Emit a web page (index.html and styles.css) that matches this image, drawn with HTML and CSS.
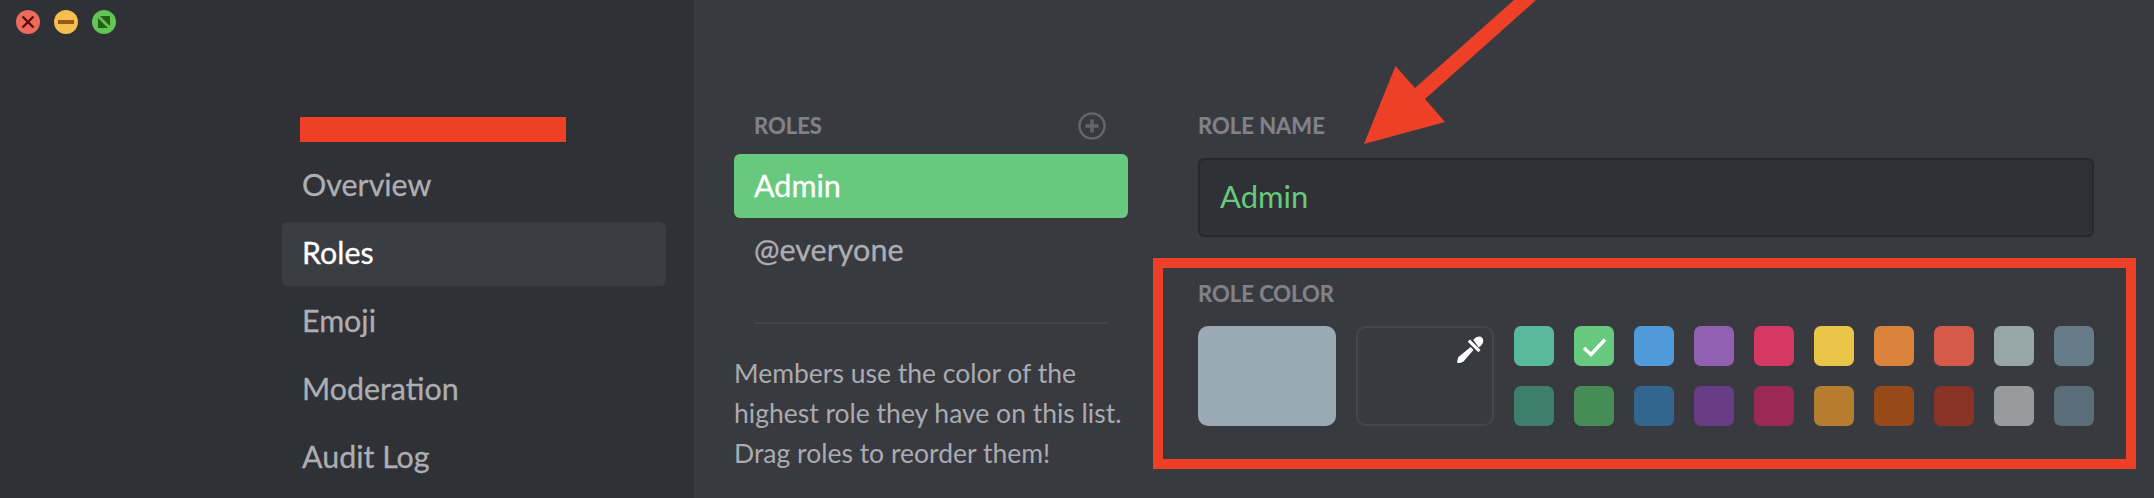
FILE: index.html
```html
<!DOCTYPE html>
<html lang="en">
<head>
<meta charset="utf-8">
<title>Server Settings - Roles</title>
<link rel="stylesheet" href="styles.css">
</head>
<body>
<div class="app">
  <aside class="sidebar">
    <div class="lights">
      <span class="light close"><svg viewBox="0 0 24 24"><path d="M6.500 6.500 17.500 17.500M17.500 6.500 6.500 17.500"/></svg></span>
      <span class="light min"><svg viewBox="0 0 24 24"><path d="M4 12H20"/></svg></span>
      <span class="light max"><svg viewBox="0 0 24 24"><path class="fill" d="M8 6H18V16ZM6 8V18H16Z"/></svg></span>
    </div>
    <div class="redact"></div>
    <nav class="nav">
      <a class="nav-item">Overview</a>
      <a class="nav-item active">Roles</a>
      <a class="nav-item">Emoji</a>
      <a class="nav-item">Moderation</a>
      <a class="nav-item">Audit Log</a>
    </nav>
  </aside>
  <main class="main">
    <section class="roles">
      <div class="roles-head">
        <h2 class="label">ROLES</h2>
        <svg class="add" viewBox="0 0 28 28"><circle cx="14" cy="14" r="12.5"/><path d="M14 7.5V20.500M7.500 14H20.500"/></svg>
      </div>
      <div class="role selected">Admin</div>
      <div class="role">@everyone</div>
      <div class="divider"></div>
      <p class="help">Members use the color of the<br>highest role they have on this list.<br>Drag roles to reorder them!</p>
    </section>
    <section class="editor">
      <h2 class="label">ROLE NAME</h2>
      <div class="input">Admin</div>
      <div class="color-box">
        <h2 class="label">ROLE COLOR</h2>
        <div class="color-row">
          <div class="big default"></div>
          <div class="big custom">
            <svg class="dropper" viewBox="0 0 28 28">
              <path d="M17.200 3.800 Q21 -0.500 25 0.800 Q28.500 3 26.500 7.500 Q25.500 9.500 22.800 11.500Z"/>
              <path d="M11.800 5.800 14 3.600 24.500 14 22.300 16.200Z"/>
              <path d="M14.600 11.100 17.400 13.900 7.500 25.500 Q4 27.500 1.500 27 Q0.500 26 2.500 21Z"/>
            </svg>
          </div>
          <div class="swatches">
            <div class="sw c1"></div>
            <div class="sw c2"><svg viewBox="0 0 40 40"><path d="M10 22 17 28.500 31 13.500"/></svg></div>
            <div class="sw c3"></div>
            <div class="sw c4"></div>
            <div class="sw c5"></div>
            <div class="sw c6"></div>
            <div class="sw c7"></div>
            <div class="sw c8"></div>
            <div class="sw c9"></div>
            <div class="sw c10"></div>
            <div class="sw c11"></div>
            <div class="sw c12"></div>
            <div class="sw c13"></div>
            <div class="sw c14"></div>
            <div class="sw c15"></div>
            <div class="sw c16"></div>
            <div class="sw c17"></div>
            <div class="sw c18"></div>
            <div class="sw c19"></div>
            <div class="sw c20"></div>
          </div>
        </div>
      </div>
    </section>
  </main>
  <svg class="arrow" viewBox="0 0 180 150"><polygon points="154,0 176,0 65,99 85,122 4,144 35.500,66 55,88"/></svg>
</div>
</body>
</html>
```
FILE: styles.css
```css
* { box-sizing: border-box; }
html, body { margin: 0; padding: 0; }
body {
  width: 2154px;
  height: 498px;
  overflow: hidden;
  background: #393a40;
  font-family: "Lato", "Open Sans", sans-serif;
}
.app { position: relative; display: flex; height: 498px; }

.sidebar { width: 694px; flex: none; background: #303136; }
.lights { display: flex; gap: 14px; padding: 10px 0 0 16px; height: 34px; }
.light { width: 24px; height: 24px; border-radius: 50%; display: block; }
.light svg { display: block; width: 24px; height: 24px; fill: none; stroke-width: 2.4; }
.close { background: #ed6a5f; }
.close svg { stroke: #5a0f0a; }
.min { background: #f4bf4f; }
.min svg { stroke: #99581a; stroke-width: 4; }
.max { background: #61c454; }
.max .fill { fill: #245f14; stroke: none; }

.redact { width: 266px; height: 25px; margin: 83px 0 0 300px; background: #ee4026; }
.nav { display: flex; flex-direction: column; gap: 4px; width: 384px; margin: 12px 0 0 282px; }
.nav-item {
  display: flex; align-items: center;
  height: 64px; padding: 0 0 4px 20px;
  border-radius: 6px;
  font-size: 30.4px; font-weight: 400;
  -webkit-text-stroke: 0.3px currentColor;
  color: #acaeb3;
}
.nav-item.active { background: #3c3d43; color: #fff; }

.main { flex: 1; display: flex; }
.roles { width: 394px; margin-left: 40px; padding-top: 112px; flex: none; }
.roles-head { display: flex; align-items: center; justify-content: space-between; height: 28px; padding: 0 22px 0 20px; margin-bottom: 14px; }
.label { margin: 0; font-size: 22px; line-height: 28px; font-weight: 700; color: #808288; -webkit-text-stroke: 0.2px currentColor; }
.add { width: 28px; height: 28px; fill: none; stroke: #63656b; stroke-width: 2.500; }
.add path { stroke-width: 3.500; }
.role {
  display: flex; align-items: center;
  height: 64px; padding: 0 0 3px 20px;
  border-radius: 6px;
  font-size: 30.5px; font-weight: 400;
  -webkit-text-stroke: 0.3px currentColor;
  color: #acaeb3;
}
.role.selected { background: #66c97e; color: #fff; }
.divider { height: 2px; margin: 40px 20px 0; background: #42444a; }
.help { margin: 29px 0 0 0; font-size: 26.5px; line-height: 40px; color: #a9abb0; }

.editor { width: 896px; margin-left: 70px; padding-top: 112px; flex: none; }
.input {
  display: flex; align-items: center;
  height: 79px; margin-top: 18px; padding: 0 0 3px 20px;
  background: #303136;
  border: 2px solid #27282c;
  border-radius: 6px;
  font-size: 31px;
  color: #66c97e;
}
.color-box {
  height: 211px;
  margin: 21px -42px 0 -45px;
  padding: 12px 0 0 35px;
  border: 10px solid #ee4026;
}
.color-row { display: flex; gap: 20px; margin-top: 18px; }
.big { width: 138px; height: 100px; border-radius: 10px; }
.default { background: #99aab5; }
.custom { position: relative; border: 2px solid #45474d; }
.dropper { position: absolute; right: 8px; top: 8px; width: 28px; height: 28px; fill: #fff; }
.swatches { display: grid; grid-template-columns: repeat(10, 40px); grid-auto-rows: 40px; gap: 20px; }
.sw { border-radius: 7px; }
.sw svg { display: block; width: 40px; height: 40px; fill: none; stroke: #fff; stroke-width: 3.500; }
.c1 { background: #58b99d; }
.c2 { background: #66c97e; }
.c3 { background: #4f9bd9; }
.c4 { background: #9160b3; }
.c5 { background: #d63864; }
.c6 { background: #ebc547; }
.c7 { background: #dc833b; }
.c8 { background: #d55a47; }
.c9 { background: #97a6a6; }
.c10 { background: #667d89; }
.c11 { background: #3e7f6c; }
.c12 { background: #458c55; }
.c13 { background: #33668f; }
.c14 { background: #693c88; }
.c15 { background: #9c2858; }
.c16 { background: #b67d30; }
.c17 { background: #974919; }
.c18 { background: #8a3428; }
.c19 { background: #979b9e; }
.c20 { background: #596e79; }

.arrow { position: absolute; left: 1360px; top: 0; width: 180px; height: 150px; fill: #ee4026; pointer-events: none; }
```
